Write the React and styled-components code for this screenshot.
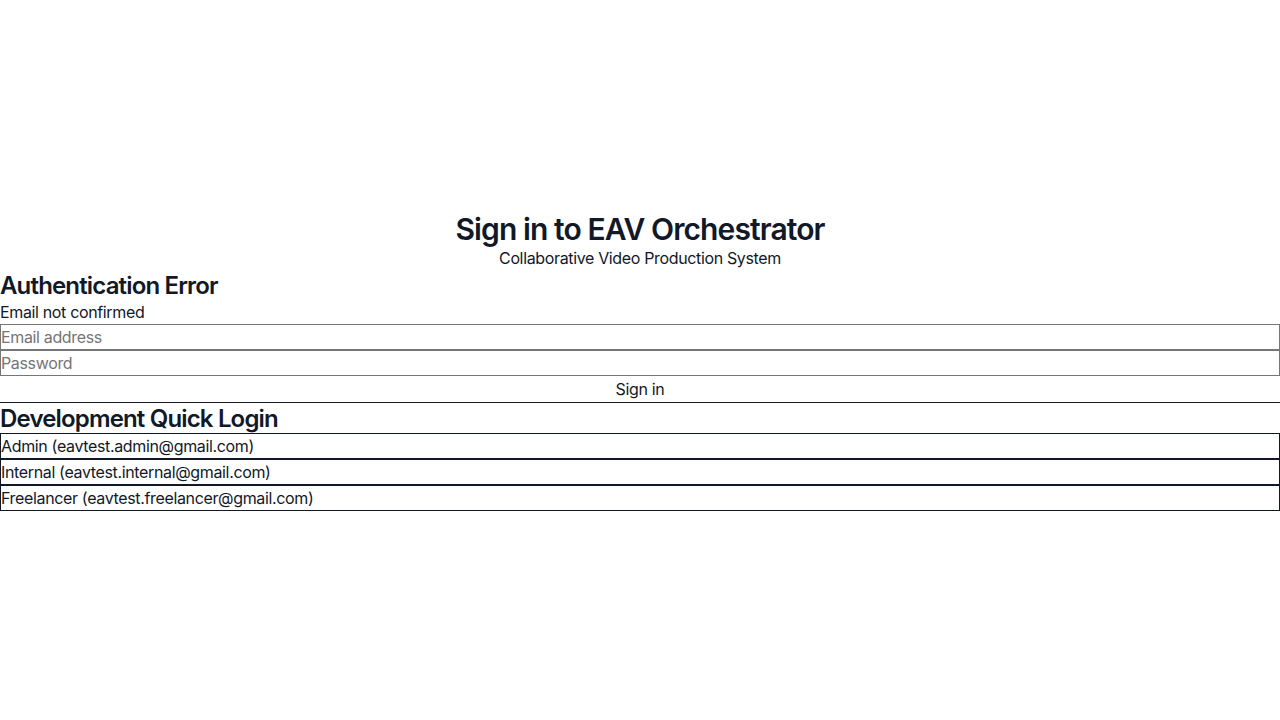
import React from 'react';
import styled, { createGlobalStyle } from 'styled-components';

const GlobalStyle = createGlobalStyle`
  *, *::before, *::after {
    box-sizing: border-box;
  }
  html, body {
    margin: 0;
    padding: 0;
  }
  body {
    font-family: Inter, "Noto Sans", sans-serif;
    font-size: 16px;
    line-height: 1.5;
    letter-spacing: -0.022em;
    color: #111827;
    background: #ffffff;
  }
`;

const Page = styled.div`
  min-height: 100vh;
  display: flex;
  flex-direction: column;
  justify-content: center;
`;

const Header = styled.div`
  text-align: center;
`;

const Title = styled.h1`
  margin: 0;
  font-size: 30px;
  line-height: 36px;
  font-weight: 600;
  letter-spacing: -0.03em;
  padding-top: 1px;
  margin-bottom: -1px;
`;

const Subtitle = styled.p`
  margin: 0;
`;

const SectionTitle = styled.h3`
  margin: 0;
  font-size: 24px;
  line-height: 30px;
  font-weight: 600;
  letter-spacing: -0.035em;
  padding-top: 1px;
  margin-bottom: -1px;
`;

const Message = styled.p`
  margin: 0;
`;

const Form = styled.form`
  display: flex;
  flex-direction: column;
  margin: 0;
`;

const Input = styled.input`
  display: block;
  width: 100%;
  margin: 0;
  padding: 0;
  border: 1px solid #767676;
  font: inherit;
  letter-spacing: inherit;
  line-height: 24px;
  height: 26px;
  color: #111827;
  background: #fff;

  &::placeholder {
    color: #757575;
  }
`;

const Button = styled.button`
  display: block;
  width: 100%;
  margin: 0;
  padding: 0;
  height: 26px;
  font: inherit;
  letter-spacing: inherit;
  line-height: 24px;
  color: #111827;
  background: transparent;
  cursor: pointer;
  text-align: ${(p) => (p.$quick ? 'left' : 'center')};
  border: 1px solid ${(p) => (p.$quick ? '#111827' : 'transparent')};
`;

const DevSection = styled.div`
  border-top: 1px solid #111827;
`;

const quickUsers = [
  { role: 'Admin', email: 'eavtest.admin@gmail.com' },
  { role: 'Internal', email: 'eavtest.internal@gmail.com' },
  { role: 'Freelancer', email: 'eavtest.freelancer@gmail.com' },
];

const App = () => {
  return (
    <>
      <GlobalStyle />
      <Page>
        <Header>
          <Title>Sign in to EAV Orchestrator</Title>
          <Subtitle>Collaborative Video Production System</Subtitle>
        </Header>
        <div>
          <SectionTitle>Authentication Error</SectionTitle>
          <Message>Email not confirmed</Message>
        </div>
        <Form onSubmit={(e) => e.preventDefault()}>
          <Input type="email" placeholder="Email address" />
          <Input type="password" placeholder="Password" />
          <Button type="submit">Sign in</Button>
        </Form>
        <DevSection>
          <SectionTitle>Development Quick Login</SectionTitle>
          {quickUsers.map((u) => (
            <Button key={u.email} $quick type="button">
              {u.role} ({u.email})
            </Button>
          ))}
        </DevSection>
      </Page>
    </>
  );
};

export default App;
